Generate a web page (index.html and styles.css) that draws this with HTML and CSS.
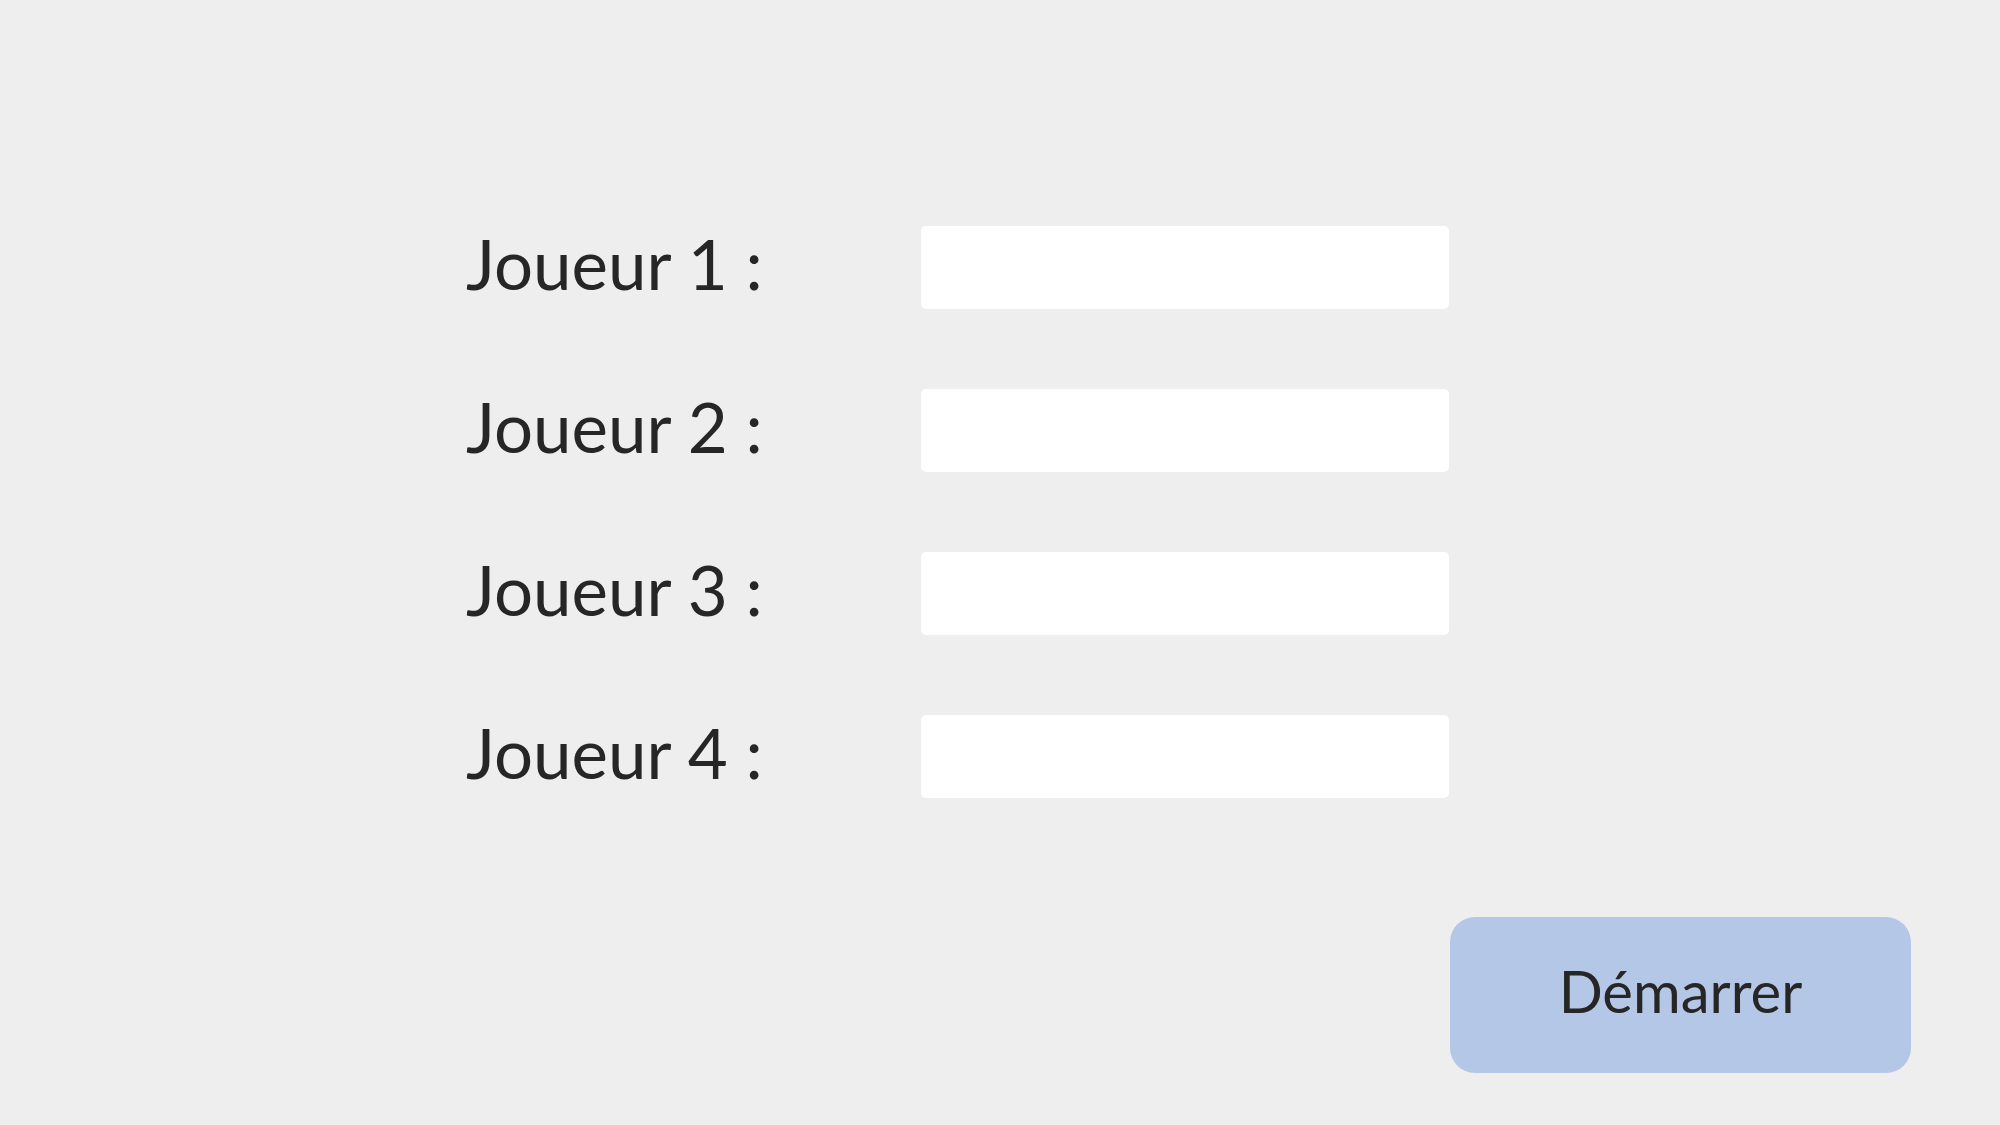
FILE: index.html
```html
<!DOCTYPE html>
<html lang="fr">
<head>
<meta charset="utf-8">
<title>Joueurs</title>
<link rel="stylesheet" href="styles.css">
</head>
<body>
<main class="page">
  <form class="players">
    <label class="label" for="p1">Joueur 1 :</label>
    <input class="field" id="p1" type="text">
    <label class="label" for="p2">Joueur 2 :</label>
    <input class="field" id="p2" type="text">
    <label class="label" for="p3">Joueur 3 :</label>
    <input class="field" id="p3" type="text">
    <label class="label" for="p4">Joueur 4 :</label>
    <input class="field" id="p4" type="text">
  </form>
  <div class="actions">
    <button class="start" type="button">Démarrer</button>
  </div>
</main>
</body>
</html>
```
FILE: styles.css
```css
html, body {
  margin: 0;
  padding: 0;
  background: #eeeeee;
}
.page {
  width: 2000px;
  height: 1125px;
  box-sizing: border-box;
  padding-top: 226px;
  font-family: "Lato", "Open Sans", sans-serif;
  color: #262626;
}
.players {
  display: grid;
  grid-template-columns: 455px 528px;
  grid-auto-rows: 83px;
  row-gap: 80px;
  padding-left: 466px;
}
.label {
  display: flex;
  align-items: center;
  font-size: 69px;
  line-height: 1;
  padding-bottom: 8px;
}
.field {
  border: none;
  border-radius: 5px;
  background: #ffffff;
  margin: 0;
  padding: 0;
  height: 83px;
  width: 528px;
  outline: none;
}
.actions {
  display: flex;
  justify-content: flex-end;
  padding-right: 89px;
  margin-top: 119px;
}
.start {
  width: 461px;
  height: 156px;
  border: none;
  border-radius: 25px;
  background: #b4c7e7;
  color: #262626;
  font-family: "Lato", "Open Sans", sans-serif;
  font-size: 58px;
  padding: 0 0 10px 0;
}
```
